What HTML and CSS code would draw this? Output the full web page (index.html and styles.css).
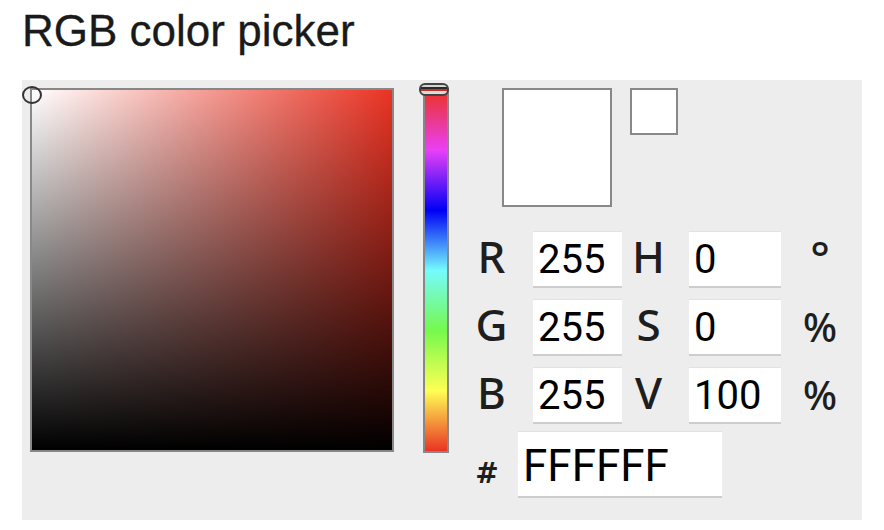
FILE: index.html
```html
<!DOCTYPE html>
<html>
<head>
<meta charset="utf-8">
<title>RGB color picker</title>
<link rel="stylesheet" href="styles.css">
</head>
<body>
<h1 class="title">RGB color picker</h1>
<div class="picker">
  <div class="sv"><span class="sv-marker"></span></div>
  <div class="hue"><span class="hue-thumb"></span></div>
  <div class="side">
    <div class="swatches">
      <div class="swatch swatch-lg"></div>
      <div class="swatch swatch-sm"></div>
    </div>
    <div class="fields">
      <label class="lbl lbl-a">R</label><input class="num" value="255"><label class="lbl lbl-b">H</label><input class="num" value="0"><span class="unit unit-deg">°</span>
      <label class="lbl lbl-a">G</label><input class="num" value="255"><label class="lbl lbl-b">S</label><input class="num" value="0"><span class="unit">%</span>
      <label class="lbl lbl-a">B</label><input class="num" value="255"><label class="lbl lbl-b">V</label><input class="num" value="100"><span class="unit">%</span>
    </div>
    <div class="hex-row">
      <span class="hash">#</span><input class="hex" value="FFFFFF">
    </div>
  </div>
</div>
</body>
</html>
```
FILE: styles.css
```css
html, body {
  margin: 0;
  padding: 0;
  background: #fff;
}

.title {
  margin: 5px 0 0 22px;
  font-family: "Liberation Sans", Arial, sans-serif;
  font-size: 44px;
  font-weight: normal;
  line-height: 51px;
  color: #1a1a1a;
  -webkit-text-stroke: 0.3px #1a1a1a;
}

.picker {
  margin: 24px 0 0 22px;
  width: 840px;
  height: 440px;
  box-sizing: border-box;
  background: #ededed;
  padding: 8px 0 0 8px;
  display: flex;
  align-items: flex-start;
}

.sv {
  position: relative;
  flex: none;
  width: 360px;
  height: 360px;
  border: 2px solid #878787;
  background:
    linear-gradient(to bottom, rgba(0, 0, 0, 0), #000),
    linear-gradient(to right, #fff, #ea3323);
}

.sv-marker {
  position: absolute;
  left: -10px;
  top: -4px;
  width: 16px;
  height: 14px;
  border: 2px solid #333;
  border-radius: 50%;
}

.hue {
  position: relative;
  flex: none;
  margin-left: 29px;
  width: 22px;
  height: 361px;
  border: 2px solid #878787;
  background: linear-gradient(to bottom, #ea3323, #ea3ff7, #0000f5, #75fbfd, #75f94d, #ffff54, #ea3323);
}

.hue-thumb {
  position: absolute;
  left: -6px;
  top: -7px;
  width: 26px;
  height: 9px;
  border: 2px solid #444;
  border-radius: 6px;
  background: linear-gradient(to bottom, #d4d4d4 0 22%, #2a2a2a 22% 40%, #c4302a 40% 72%, #dcdcdc 72%);
}

.side {
  flex: none;
  margin-left: 23px;
  width: 388px;
}

.swatches {
  display: flex;
  align-items: flex-start;
  gap: 18px;
  padding-left: 30px;
}

.swatch {
  background: #fff;
  border: 2px solid #888;
}

.swatch-lg {
  width: 106px;
  height: 115px;
}

.swatch-sm {
  width: 44px;
  height: 43px;
}

.fields {
  margin-top: 24px;
  display: grid;
  grid-template-columns: 61px 89px 67px 92px 78px;
  grid-auto-rows: 57px;
  row-gap: 11px;
}

.lbl,
.unit {
  display: flex;
  align-items: center;
  justify-content: center;
  font-family: "Noto Sans", "DejaVu Sans", sans-serif;
  font-weight: 500;
  font-size: 44px;
  color: #1e1e1e;
}

.lbl {
  padding-bottom: 7px;
}

.lbl-a {
  padding-right: 22px;
}

.lbl-b {
  padding-right: 14px;
}

.unit {
  font-size: 40px;
  padding-bottom: 2px;
}

.unit-deg {
  font-size: 46px;
  padding-bottom: 6px;
}

.num,
.hex {
  box-sizing: border-box;
  margin: 0;
  border: 0;
  border-top: 1px solid #e2e2e2;
  border-bottom: 2px solid #cdcdcd;
  background: #fff;
  color: #000;
  font-family: Roboto, "Liberation Sans", sans-serif;
  outline: none;
}

.num {
  width: 100%;
  height: 57px;
  padding: 0 0 0 5px;
  font-size: 40px;
}

.hex-row {
  margin-top: 7px;
  display: flex;
  align-items: center;
}

.hash {
  width: 30px;
  padding-right: 16px;
  padding-top: 18px;
  text-align: center;
  font-family: "DejaVu Sans", sans-serif;
  font-weight: bold;
  font-size: 28px;
  color: #1e1e1e;
}

.hex {
  width: 204px;
  height: 67px;
  padding: 3px 0 0 5px;
  font-size: 44px;
}
```
